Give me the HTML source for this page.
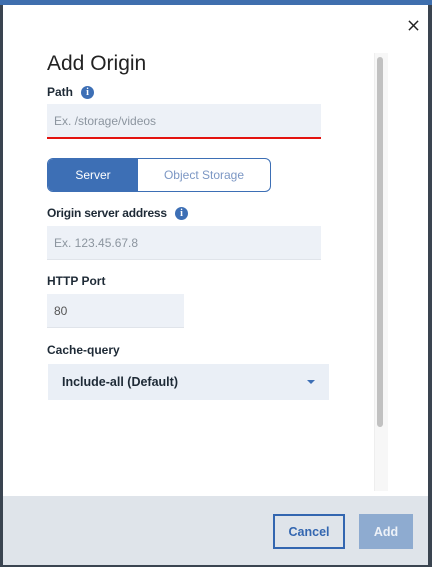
<!DOCTYPE html>
<html><head><style>
*{box-sizing:border-box;margin:0;padding:0}
body{width:432px;height:567px;background:#3a4450;position:relative;overflow:hidden;font-family:"Liberation Sans",sans-serif}
.top{position:absolute;left:0;top:0;width:432px;height:5px;background:#3f6fae}
.modal{position:absolute;left:3px;top:5px;width:425px;height:560px;background:#fff}
.foot{position:absolute;left:3px;top:496px;width:425px;height:69px;background:#dfe4ea}
.abs{position:absolute}
.lbl{position:absolute;left:47px;font-size:12px;font-weight:bold;color:#1e2a36}
.inp{position:absolute;background:#edf1f7;border-bottom:1px solid #e0e4ea;color:#8c959f;font-size:12px;padding-left:7px;display:flex;align-items:center}
.info{position:absolute;width:13px;height:13px;border-radius:50%;background:#3d6fb5;color:#fff;font-size:10px;font-weight:bold;text-align:center;line-height:13px;font-family:"Liberation Serif",serif}
</style></head><body>
<div class="top"></div>
<div class="modal"></div>
<svg class="abs" style="left:408px;top:20px" width="11" height="11" viewBox="0 0 12 12"><path d="M1 1L11 11M11 1L1 11" stroke="#222" stroke-width="1.6"/></svg>
<div class="abs" style="left:374px;top:53px;width:14px;height:438px;background:#f7f7f7;border-left:1px solid #eee"></div>
<div class="abs" style="left:377px;top:57px;width:6px;height:370px;border-radius:3px;background:#c1c1c1"></div>
<div class="abs" style="left:47px;top:52px;font-size:21px;color:#222;font-weight:300">Add Origin</div>
<div class="lbl" style="top:85px">Path</div>
<div class="info" style="left:81px;top:86px">i</div>
<div class="inp" style="left:47px;top:104px;width:274px;height:35px;border-bottom:2px solid #e3130f">Ex. /storage/videos</div>
<div class="abs" style="left:47px;top:158px;width:224px;height:34px;border:1px solid #3d6fb5;border-radius:6px;overflow:hidden;display:flex;font-size:12px">
<div style="width:90px;background:#3d6fb5;color:#fff;display:flex;align-items:center;justify-content:center">Server</div>
<div style="flex:1;color:#7c97c4;display:flex;align-items:center;justify-content:center">Object Storage</div></div>
<div class="lbl" style="top:206px;letter-spacing:-0.2px">Origin server address</div>
<div class="info" style="left:175px;top:207px">i</div>
<div class="inp" style="left:47px;top:226px;width:274px;height:34px">Ex. 123.45.67.8</div>
<div class="lbl" style="top:274px">HTTP Port</div>
<div class="inp" style="left:47px;top:294px;width:137px;height:34px;color:#555">80</div>
<div class="lbl" style="top:343px">Cache-query</div>
<div class="abs" style="left:48px;top:364px;width:281px;height:36px;background:#eaeff6"></div>
<div class="abs" style="left:62px;top:375px;font-size:12.5px;font-weight:bold;color:#1e2a36">Include-all (Default)</div>
<div class="abs" style="left:307px;top:380px;width:0;height:0;border-left:4px solid transparent;border-right:4px solid transparent;border-top:4px solid #3d6fb5"></div>
<div class="foot"></div>
<div class="abs" style="left:273px;top:514px;width:72px;height:35px;border:2px solid #3366b0;color:#3366b0;font-size:12.5px;font-weight:bold;display:flex;align-items:center;justify-content:center">Cancel</div>
<div class="abs" style="left:359px;top:514px;width:54px;height:35px;background:#8eabd0;color:#eef2f8;font-size:12.5px;font-weight:bold;display:flex;align-items:center;justify-content:center">Add</div>
</body></html>
